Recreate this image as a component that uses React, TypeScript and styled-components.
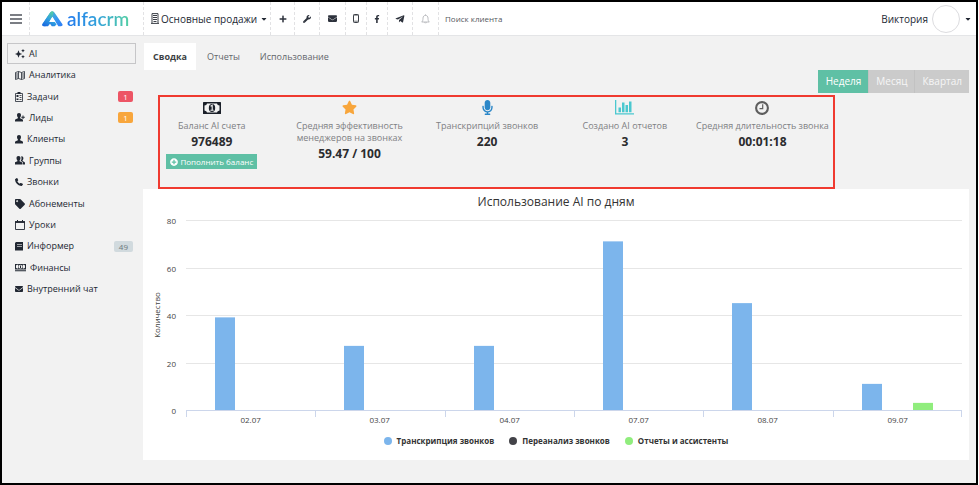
import React, { useState } from 'react';
import styled, { createGlobalStyle } from 'styled-components';
import {
  FaCaretDown, FaEnvelope, FaFacebookF, FaMicrophone, FaPhoneAlt, FaPlus,
  FaPlusCircle, FaStar, FaTag, FaTelegramPlane, FaWrench,
} from 'react-icons/fa';

const GlobalStyle = createGlobalStyle`
  *, *::before, *::after { box-sizing: border-box; }
  body {
    margin: 0;
    background: #fff;
    color: #222833;
    font-family: "Open Sans", "Noto Sans", sans-serif;
    font-size: 9px;
    line-height: 12px;
  }
  button, input, select { font: inherit; color: inherit; }
  button { cursor: pointer; }
  svg { display: block; flex: none; }
`;

const Frame = styled.div`
  display: flex;
  flex-direction: column;
  min-height: 100vh;
  margin-right: 1px;
  border: 2px solid #000;
  background: #f2f2f2;
`;

/* ---------- header ---------- */

const Header = styled.header`
  display: flex;
  align-items: stretch;
  height: 34px;
  background: #fff;
  border-bottom: 1px solid #e4e5e7;
  font-size: 10px;
`;

const divider = '1px dashed #e2e2e4';

const ToolButton = styled.button<{ $width: number }>`
  display: flex;
  align-items: center;
  justify-content: center;
  width: ${(p) => p.$width}px;
  padding: 0;
  border: 0;
  border-right: ${divider};
  background: none;
  color: #2d323c;
`;

const Brand = styled.a`
  display: flex;
  align-items: center;
  gap: 4px;
  width: 114px;
  padding-left: 12px;
  border-right: ${divider};
  text-decoration: none;
`;

const BrandName = styled.span`
  font-family: Lato, sans-serif;
  font-size: 19px;
  line-height: 20px;
  font-weight: 600;
  background: linear-gradient(90deg, #1f78ee, #35a3da 50%, #54cfa4);
  background-clip: text;
  -webkit-background-clip: text;
  color: transparent;
`;

const Branch = styled.label`
  display: flex;
  align-items: center;
  gap: 2px;
  width: 127px;
  padding-left: 7px;
  border-right: ${divider};
`;

const BranchSelect = styled.select`
  appearance: none;
  padding: 0;
  border: 0;
  background: none;
`;

const Search = styled.input`
  flex: 1;
  min-width: 0;
  padding: 0 6px;
  border: 0;
  background: none;
  font-size: 8px;
  &::placeholder { color: #55585e; opacity: 1; }
`;

const UserButton = styled.button`
  display: flex;
  align-items: center;
  gap: 4px;
  padding: 0 4px 0 0;
  border: 0;
  background: none;
`;

const Avatar = styled.span`
  width: 28px;
  height: 28px;
  border: 1px solid #dcdcdf;
  border-radius: 50%;
`;

/* ---------- sidebar ---------- */

const Body = styled.div`
  display: flex;
  flex: 1;
`;

const Sidebar = styled.nav`
  display: grid;
  grid-auto-rows: 1fr;
  align-self: flex-start;
  width: 141px;
  height: 257px;
  margin-top: 7px;
  padding: 0 7px 0 5px;
`;

const NavLink = styled.a<{ $active?: boolean }>`
  display: flex;
  align-items: center;
  gap: 4px;
  padding: 0 2px 0 7px;
  border: 1px solid ${(p) => (p.$active ? '#c6c6c8' : 'transparent')};
  color: inherit;
  text-decoration: none;
`;

const Badge = styled.span<{ $tone: 'red' | 'orange' | 'grey' }>`
  min-width: 15px;
  margin-left: auto;
  padding: 0 5px;
  border-radius: 2px;
  font-size: 8px;
  line-height: 11px;
  text-align: center;
  color: ${(p) => (p.$tone === 'grey' ? '#6d777c' : '#fff')};
  background: ${(p) => ({ red: '#ed5565', orange: '#f8a63c', grey: '#d1dade' })[p.$tone]};
`;

/* ---------- content ---------- */

const Main = styled.main`
  flex: 1;
  min-width: 0;
  padding: 7px 7px 22px 0;
`;

const Tabs = styled.div`
  display: flex;
  gap: 2px;
  padding-left: 1px;
`;

const Tab = styled.button<{ $active: boolean }>`
  padding: 0 9px;
  border: 0;
  line-height: 27px;
  background: ${(p) => (p.$active ? '#fff' : 'none')};
  color: ${(p) => (p.$active ? '#3c3f44' : '#63666b')};
  font-weight: ${(p) => (p.$active ? 700 : 400)};
`;

const Periods = styled.div`
  display: flex;
  justify-content: flex-end;
`;

const Period = styled.button<{ $active: boolean }>`
  padding: 0 7px;
  border: 0;
  border-left: 1px solid ${(p) => (p.$active ? '#5fc0a5' : '#c2c2c2')};
  font-size: 10px;
  line-height: 23px;
  background: ${(p) => (p.$active ? '#5fc0a5' : '#cbcbcb')};
  color: ${(p) => (p.$active ? '#fff' : '#f6f6f6')};
`;

const Stats = styled.section`
  position: relative;
  display: grid;
  grid-template-columns: repeat(6, 1fr);
  min-height: 94px;
  margin-top: 2px;
  padding-top: 3px;
`;

const Highlight = styled.div`
  position: absolute;
  inset: 0 134px 0 15px;
  border: 2px solid #f03a30;
  pointer-events: none;
`;

const Stat = styled.div`
  display: flex;
  flex-direction: column;
  align-items: center;
  text-align: center;
`;

const StatIcon = styled.div<{ $color: string }>`
  display: flex;
  align-items: center;
  height: 19px;
  margin-bottom: 3px;
  color: ${(p) => p.$color};
`;

const StatLabel = styled.div`
  margin-bottom: 1px;
  color: #7e8083;
  white-space: pre-line;
`;

const StatValue = styled.div`
  font-size: 12px;
  line-height: 18px;
  font-weight: 700;
  color: #2b2b2e;
`;

const TopUp = styled.button`
  display: flex;
  align-items: center;
  gap: 2px;
  margin-top: 3px;
  padding: 0 4px;
  border: 0;
  background: #5fc0a5;
  color: #fff;
  font-size: 8px;
  line-height: 15px;
  white-space: nowrap;
`;

const ChartPanel = styled.section`
  padding: 5px 7px 13px;
  background: #fff;
`;

const ChartTitle = styled.h2`
  margin: 0;
  font-size: 12px;
  line-height: 16px;
  font-weight: 400;
  text-align: center;
  color: #333;
`;

const Plot = styled.svg`
  width: 100%;
  height: auto;
  font-size: 8px;
  fill: #444;
`;

const Legend = styled.ul`
  display: flex;
  justify-content: center;
  gap: 15px;
  margin: 0;
  padding: 0;
  list-style: none;
  font-size: 8px;
  font-weight: 700;
  color: #333;
`;

const LegendItem = styled.li<{ $color: string }>`
  display: flex;
  align-items: center;
  gap: 5px;
  &::before {
    content: "";
    width: 8px;
    height: 8px;
    border-radius: 50%;
    background: ${(p) => p.$color};
  }
`;

/* ---------- icons ---------- */

const MenuIcon = () => (
  <svg width="12" height="10" viewBox="0 0 12 10" stroke="#50545c" strokeWidth="1.5">
    <path d="M0 1H12M0 5H12M0 9H12" />
  </svg>
);

const LogoMark = () => (
  <svg width="21" height="16" viewBox="0 0 21 16">
    <defs>
      <linearGradient id="mark-left" x1="0.7" y1="0" x2="0.1" y2="1">
        <stop offset="0" stopColor="#56cfa0" />
        <stop offset="0.5" stopColor="#2f9fe0" />
        <stop offset="1" stopColor="#1763e0" />
      </linearGradient>
      <linearGradient id="mark-right" x1="0" y1="0" x2="1" y2="1">
        <stop offset="0" stopColor="#55cda4" />
        <stop offset="0.55" stopColor="#3a9bee" />
        <stop offset="1" stopColor="#2c7cf6" />
      </linearGradient>
    </defs>
    <path d="M8.2 1.4Q10.3-1 12.4 1.4L20.3 13Q21.3 15 19 15.3H16.4L10.3 6 6.2 12 3.6 15.3H1.8Q-.6 15 .6 12.8Z" fill="url(#mark-right)" />
    <path d="M8.2 1.4Q9.5-.1 11.2.7L10.6 5.6 7.6 10.2H12.2L14.6 13.6 12.6 15.3H9.8L8 12.8 6 15.3H1.8Q-.6 15 .6 12.8Z" fill="url(#mark-left)" />
    <path d="M10.4 5.8L13.6 11H7.2Z" fill="#fff" />
  </svg>
);

const BuildingIcon = () => (
  <svg width="8" height="11" viewBox="0 0 8 11" fill="none" stroke="#3c4048" strokeWidth="1">
    <path d="M1 10V.6H7V10M0 10.4H8M2 2.5H6M2 4.5H6M2 6.5H6M2.5 8.5H5.5" />
  </svg>
);

const PhoneIcon = () => (
  <svg width="6" height="9" viewBox="0 0 6 9" fill="none" stroke="#3c4048">
    <rect x=".5" y=".5" width="5" height="8" rx=".8" />
    <path d="M.5 7.2H5.5M.5 1.2H5.5" strokeWidth=".7" />
  </svg>
);

const BellIcon = () => (
  <svg width="9" height="10" viewBox="0 0 9 10" fill="none" stroke="#a9abb0" strokeWidth=".8">
    <path d="M.7 8H8.3C7.2 7 7 6 7 4.2 7 2.4 6 1.4 4.5 1.4S2 2.4 2 4.2C2 6 1.8 7 .7 8ZM4.5 1.4V.4M3.5 8.2Q4.5 10.2 5.5 8.2" />
  </svg>
);

const SparklesIcon = () => (
  <svg width="10" height="10" viewBox="0 0 10 10" fill="currentColor">
    <path d="M3.5 1.2L4.6 3.9 7.2 5 4.6 6.1 3.5 8.8 2.4 6.1 0 5 2.4 3.9ZM8 0L8.6 1.1 9.8 1.7 8.6 2.3 8 3.4 7.4 2.3 6.2 1.7 7.4 1.1ZM8 6L8.6 7.1 9.8 7.7 8.6 8.3 8 9.4 7.4 8.3 6.2 7.7 7.4 7.1Z" />
  </svg>
);

const MapIcon = () => (
  <svg width="10" height="9" viewBox="0 0 10 9" fill="none" stroke="currentColor" strokeWidth=".8">
    <path d="M.5 1.5L3.5.5 6.5 1.5 9.5.5V7.5L6.5 8.5 3.5 7.5.5 8.5ZM3.5.5V7.5M6.5 1.5V8.5M2 2V7.5M8 2V7" />
  </svg>
);

const TasksIcon = () => (
  <svg width="8" height="10" viewBox="0 0 8 10" fill="none" stroke="currentColor" strokeWidth=".8">
    <path d="M.5 1.5H7.5V9.5H.5ZM4.5 3.5H6.5M4.5 5.5H6.5M4.5 7.5H6.5" />
    <path d="M1.5 3H3.5V5H1.5ZM1.5 6.5H3.5V8H1.5ZM2.5 0H5.5V2H2.5Z" fill="currentColor" stroke="none" />
  </svg>
);

const personPath = 'M4 0C5.3 0 6 .9 6 2.2 6 3.2 5.6 4 5.1 4.5V5.3L7.4 6.3Q8 6.6 8 7.3V8.5H0V7.3Q0 6.6.6 6.3L2.9 5.3V4.5C2.4 4 2 3.2 2 2.2 2 .9 2.7 0 4 0Z';

const PersonIcon = () => (
  <svg width="8" height="9" viewBox="0 0 8 9" fill="currentColor"><path d={personPath} /></svg>
);

const LeadIcon = () => (
  <svg width="10" height="9" viewBox="0 0 10 9" fill="currentColor">
    <path d={personPath} />
    <path d="M7.5 2.5H8.5V3.7H9.8V4.7H8.5V6H7.5V4.7H6.3V3.7H7.5Z" />
  </svg>
);

const GroupIcon = () => (
  <svg width="10" height="9" viewBox="0 0 10 9" fill="currentColor">
    <path d={personPath} transform="translate(-.5 0)" />
    <path d="M6.2.4C7.6.2 8.4 1 8.4 2.3 8.4 3.2 8 3.9 7.6 4.3V5L9.4 6Q10 6.3 10 7V8.5H8V7Q8 6.1 7.2 5.7L5.8 5V4.6Q6.5 3.8 6.5 2.4 6.5 1.2 6.2.4Z" />
  </svg>
);

const HandsetIcon = () => (
  <svg width="8" height="8" viewBox="0 0 8 8" fill="currentColor">
    <path d="M.3 1L1.8 0Q2.3-.1 2.5.4L3.2 2Q3.3 2.5 2.9 2.8L2.3 3.300Q3.200 5 4.800 5.800L5.300 5.100Q5.600 4.800 6 5L7.700 5.700Q8.100 6 7.900 6.400L7 7.800Q6.700 8 6.200 7.900Q.6 6.800 0 1.700Q0 1.200.3 1Z" />
  </svg>
);

const CalendarIcon = () => (
  <svg width="10" height="10" viewBox="0 0 10 10" fill="none" stroke="currentColor">
    <path d="M.5 2H9.5V9.5H.5Z" strokeWidth=".9" />
    <path d="M0 2H10" strokeWidth="1.8" />
    <path d="M2.5 0V2M7.5 0V2" />
  </svg>
);

const NewsIcon = () => (
  <svg width="8" height="9" viewBox="0 0 8 9" fill="currentColor">
    <path d="M1 0H8V8.5H0V1Z" />
    <path d="M2 2.5H7M2 4.5H7" stroke="#f2f2f2" strokeWidth=".6" />
  </svg>
);

const CoinsIcon = () => (
  <svg width="11" height="8" viewBox="0 0 11 8" fill="currentColor">
    <path fillRule="evenodd" d="M0 0H11V5.4H0ZM1 1.5V3.7L2 4.5H3.3V.8H2ZM5.5.8A1.8 1.8 0 0 0 5.5 4.5 1.8 1.8 0 0 0 5.5.8ZM7.7.8V4.5H9L10 3.7V1.5L9 .8Z" />
    <path d="M5 1.4H6V3.9H5ZM0 6.2H11V7.2H0Z" />
  </svg>
);

const BanknoteIcon = () => (
  <svg width="18" height="12" viewBox="0 0 18 12">
    <rect width="18" height="12" rx=".6" fill="#1b2029" />
    <path d="M4 1.4H14Q14.2 3.4 16.5 3.6V8.4Q14.2 8.6 14 10.6H4Q3.8 8.6 1.5 8.4V3.6Q3.8 3.4 4 1.4Z" fill="#f2f2f2" />
    <ellipse cx="9" cy="6" rx="3.2" ry="4" fill="#1b2029" />
    <path d="M7.6 4.3L9.2 3.3V8M7.4 8.3H10.6" stroke="#f2f2f2" strokeWidth="1.1" fill="none" />
  </svg>
);

const BarsIcon = () => (
  <svg width="19" height="15" viewBox="0 0 19 15" fill="currentColor">
    <path d="M0 0H1.3V13.3H19V14.6H0ZM3.5 7.5H6V12.3H3.5ZM7 2.5H9.5V12.3H7ZM10.5 5H13V12.3H10.5ZM14 1.5H16.5V12.3H14Z" />
  </svg>
);

const ClockIcon = () => (
  <svg width="14" height="14" viewBox="0 0 14 14" fill="none" stroke="currentColor">
    <circle cx="7" cy="7" r="5.9" strokeWidth="2.1" />
    <path d="M7.7 3.3V7.6H4.5" strokeWidth="1.2" />
  </svg>
);

/* ---------- data ---------- */

type NavEntry = { label: string; icon: React.ReactNode; badge?: string; tone?: 'red' | 'orange' | 'grey' };

const navigation: NavEntry[] = [
  { label: 'AI', icon: <SparklesIcon /> },
  { label: 'Аналитика', icon: <MapIcon /> },
  { label: 'Задачи', icon: <TasksIcon />, badge: '1', tone: 'red' },
  { label: 'Лиды', icon: <LeadIcon />, badge: '1', tone: 'orange' },
  { label: 'Клиенты', icon: <PersonIcon /> },
  { label: 'Группы', icon: <GroupIcon /> },
  { label: 'Звонки', icon: <HandsetIcon /> },
  { label: 'Абонементы', icon: <FaTag size={10} /> },
  { label: 'Уроки', icon: <CalendarIcon /> },
  { label: 'Информер', icon: <NewsIcon />, badge: '49', tone: 'grey' },
  { label: 'Финансы', icon: <CoinsIcon /> },
  { label: 'Внутренний чат', icon: <FaEnvelope size={8} /> },
];

const stats = [
  { label: 'Баланс AI счета', value: '976489', icon: <BanknoteIcon />, color: '#1b2029', topUp: true },
  { label: 'Средняя эффективность\nменеджеров на звонках', value: '59.47 / 100', icon: <FaStar size={15} />, color: '#f8a63c' },
  { label: 'Транскрипций звонков', value: '220', icon: <FaMicrophone size={15} />, color: '#2b87c8' },
  { label: 'Создано AI отчетов', value: '3', icon: <BarsIcon />, color: '#4bc8cf' },
  { label: 'Средняя длительность звонка', value: '00:01:18', icon: <ClockIcon />, color: '#5e5e5e' },
];

const days = [
  { date: '02.07', calls: 39, reports: 0 },
  { date: '03.07', calls: 27, reports: 0 },
  { date: '04.07', calls: 27, reports: 0 },
  { date: '07.07', calls: 71, reports: 0 },
  { date: '08.07', calls: 45, reports: 0 },
  { date: '09.07', calls: 11, reports: 3 },
];

const series = [
  { name: 'Транскрипция звонков', color: '#7cb5ec' },
  { name: 'Переанализ звонков', color: '#434348' },
  { name: 'Отчеты и ассистенты', color: '#90ed7d' },
];

/* ---------- chart ---------- */

const plotLeft = 36;
const plotRight = 812;
const plotTop = 10;
const plotBottom = 200;
const slot = (plotRight - plotLeft) / days.length;
const scaleY = (v: number) => plotBottom - (v / 80) * (plotBottom - plotTop);

function UsageChart() {
  return (
    <Plot viewBox="0 0 812 225" role="img" aria-label="Использование AI по дням">
      <text transform="translate(10 105) rotate(-90)" textAnchor="middle">Количество</text>
      {[0, 20, 40, 60, 80].map((v) => (
        <g key={v}>
          {v > 0 && <path d={`M${plotLeft} ${Math.round(scaleY(v)) + 0.5}H${plotRight}`} stroke="#e6e6e6" />}
          <text x={plotLeft - 10} y={scaleY(v) + 4} textAnchor="end">{v}</text>
        </g>
      ))}
      {days.map((d, i) => {
        const x = Math.round(plotLeft + i * slot);
        return (
          <g key={d.date}>
            <rect x={x + 29} y={scaleY(d.calls)} width="20" height={plotBottom - scaleY(d.calls)} fill={series[0].color} />
            {d.reports > 0 && (
              <rect x={x + 80} y={scaleY(d.reports)} width="20" height={plotBottom - scaleY(d.reports)} fill={series[2].color} />
            )}
            <text x={x + slot / 2} y={plotBottom + 13} textAnchor="middle">{d.date}</text>
          </g>
        );
      })}
      <path d={`M${plotLeft} ${plotBottom + 0.5}H${plotRight}`} stroke="#ccd6eb" />
      {[...days, null].map((_, i) => (
        <path key={i} d={`M${Math.min(Math.round(plotLeft + i * slot), plotRight - 1) + 0.5} ${plotBottom}v7`} stroke="#ccd6eb" />
      ))}
    </Plot>
  );
}

const tabs = ['Сводка', 'Отчеты', 'Использование'];
const periods = ['Неделя', 'Месяц', 'Квартал'];

export default function App() {
  const [tab, setTab] = useState(tabs[0]);
  const [period, setPeriod] = useState(periods[0]);

  return (
    <>
      <GlobalStyle />
      <Frame>
        <Header>
          <ToolButton $width={28} aria-label="Меню"><MenuIcon /></ToolButton>
          <Brand href="#">
            <LogoMark />
            <BrandName>alfacrm</BrandName>
          </Brand>
          <Branch>
            <BuildingIcon />
            <BranchSelect aria-label="Филиал">
              <option>Основные продажи</option>
            </BranchSelect>
            <FaCaretDown size={8} />
          </Branch>
          <ToolButton $width={24} aria-label="Добавить"><FaPlus size={8} /></ToolButton>
          <ToolButton $width={25} aria-label="Настройки"><FaWrench size={8} /></ToolButton>
          <ToolButton $width={26} aria-label="Почта"><FaEnvelope size={9} /></ToolButton>
          <ToolButton $width={21} aria-label="Телефон"><PhoneIcon /></ToolButton>
          <ToolButton $width={21} aria-label="Facebook"><FaFacebookF size={8} /></ToolButton>
          <ToolButton $width={25} aria-label="Telegram"><FaTelegramPlane size={10} /></ToolButton>
          <ToolButton $width={26} aria-label="Уведомления"><BellIcon /></ToolButton>
          <Search type="search" placeholder="Поиск клиента" aria-label="Поиск клиента" />
          <UserButton>
            Виктория
            <Avatar />
            <FaCaretDown size={8} />
          </UserButton>
        </Header>
        <Body>
          <Sidebar>
            {navigation.map((n, i) => (
              <NavLink key={n.label} href="#" $active={i === 0}>
                {n.icon}
                {n.label}
                {n.badge && n.tone && <Badge $tone={n.tone}>{n.badge}</Badge>}
              </NavLink>
            ))}
          </Sidebar>
          <Main>
            <Tabs role="tablist">
              {tabs.map((t) => (
                <Tab key={t} role="tab" aria-selected={t === tab} $active={t === tab} onClick={() => setTab(t)}>{t}</Tab>
              ))}
            </Tabs>
            <Periods>
              {periods.map((p) => (
                <Period key={p} $active={p === period} aria-pressed={p === period} onClick={() => setPeriod(p)}>{p}</Period>
              ))}
            </Periods>
            <Stats>
              {stats.map((s) => (
                <Stat key={s.value}>
                  <StatIcon $color={s.color}>{s.icon}</StatIcon>
                  <StatLabel>{s.label}</StatLabel>
                  <StatValue>{s.value}</StatValue>
                  {s.topUp && <TopUp><FaPlusCircle size={8} />Пополнить баланс</TopUp>}
                </Stat>
              ))}
              <Highlight />
            </Stats>
            <ChartPanel>
              <ChartTitle>Использование AI по дням</ChartTitle>
              <UsageChart />
              <Legend>
                {series.map((s) => (
                  <LegendItem key={s.name} $color={s.color}>{s.name}</LegendItem>
                ))}
              </Legend>
            </ChartPanel>
          </Main>
        </Body>
      </Frame>
    </>
  );
}
